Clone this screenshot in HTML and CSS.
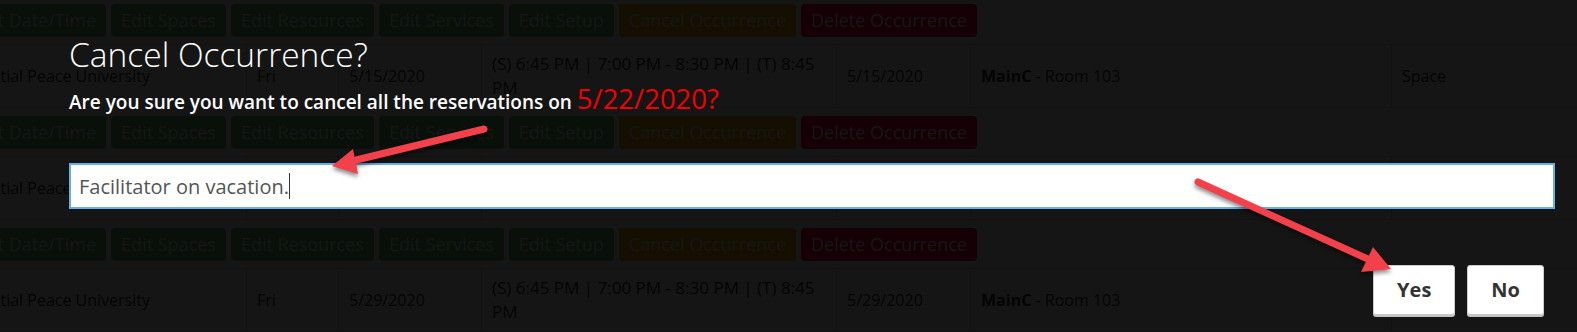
FILE: index.html
```html
<!DOCTYPE html>
<html lang="en">
<head>
<meta charset="utf-8">
<title>Cancel Occurrence</title>
<link rel="stylesheet" href="styles.css">
</head>
<body>
<div class="page">
  <div class="item">
    <div class="actions">
      <span class="btn btn-edit">Edit Date/Time</span>
      <span class="btn btn-edit">Edit Spaces</span>
      <span class="btn btn-edit">Edit Resources</span>
      <span class="btn btn-edit">Edit Services</span>
      <span class="btn btn-edit">Edit Setup</span>
      <span class="btn btn-cancel">Cancel Occurrence</span>
      <span class="btn btn-delete">Delete Occurrence</span>
    </div>
    <div class="row">
      <div class="cell">Spatial Peace University</div>
      <div class="cell">Fri</div>
      <div class="cell">5/15/2020</div>
      <div class="cell cell-time">(S) 6:45 PM | 7:00 PM - 8:30 PM | (T) 8:45 PM</div>
      <div class="cell">5/15/2020</div>
      <div class="cell"><span><b>MainC</b> - Room 103</span></div>
      <div class="cell">Space</div>
    </div>
  </div>
  <div class="item">
    <div class="actions">
      <span class="btn btn-edit">Edit Date/Time</span>
      <span class="btn btn-edit">Edit Spaces</span>
      <span class="btn btn-edit">Edit Resources</span>
      <span class="btn btn-edit">Edit Services</span>
      <span class="btn btn-edit">Edit Setup</span>
      <span class="btn btn-cancel">Cancel Occurrence</span>
      <span class="btn btn-delete">Delete Occurrence</span>
    </div>
    <div class="row">
      <div class="cell">Spatial Peace University</div>
      <div class="cell">Fri</div>
      <div class="cell">5/22/2020</div>
      <div class="cell cell-time">(S) 6:45 PM | 7:00 PM - 8:30 PM | (T) 8:45 PM</div>
      <div class="cell">5/22/2020</div>
      <div class="cell"><span><b>MainC</b> - Room 103</span></div>
      <div class="cell">Space</div>
    </div>
  </div>
  <div class="item">
    <div class="actions">
      <span class="btn btn-edit">Edit Date/Time</span>
      <span class="btn btn-edit">Edit Spaces</span>
      <span class="btn btn-edit">Edit Resources</span>
      <span class="btn btn-edit">Edit Services</span>
      <span class="btn btn-edit">Edit Setup</span>
      <span class="btn btn-cancel">Cancel Occurrence</span>
      <span class="btn btn-delete">Delete Occurrence</span>
    </div>
    <div class="row">
      <div class="cell">Spatial Peace University</div>
      <div class="cell">Fri</div>
      <div class="cell">5/29/2020</div>
      <div class="cell cell-time">(S) 6:45 PM | 7:00 PM - 8:30 PM | (T) 8:45 PM</div>
      <div class="cell">5/29/2020</div>
      <div class="cell"><span><b>MainC</b> - Room 103</span></div>
      <div class="cell">Space</div>
    </div>
  </div>
</div>

<div class="backdrop"></div>

<div class="modal">
  <h1 class="modal-title">Cancel Occurrence?</h1>
  <p class="modal-text">Are you sure you want to cancel all the reservations on <span class="modal-date">5/22/2020?</span></p>
  <div class="reason"><span>Facilitator on vacation.</span><span class="caret"></span></div>
  <div class="modal-footer">
    <span class="dlg-btn">Yes</span>
    <span class="dlg-btn">No</span>
  </div>
</div>

<svg class="annotations" width="1577" height="332" viewBox="0 0 1577 332" xmlns="http://www.w3.org/2000/svg">
  <g class="arrow">
    <line x1="484" y1="129" x2="352" y2="161" stroke="#f2414a" stroke-width="7" stroke-linecap="round"/>
    <polygon points="332,166 353,149 358,174" fill="#f2414a"/>
  </g>
  <g class="arrow">
    <line x1="1198" y1="182" x2="1370" y2="260" stroke="#f2414a" stroke-width="7" stroke-linecap="round"/>
    <polygon points="1391,269 1373,247 1361,272" fill="#f2414a"/>
  </g>
</svg>
</body>
</html>
```

FILE: styles.css
```css
html, body {
  margin: 0;
  padding: 0;
}

body {
  width: 1577px;
  height: 332px;
  overflow: hidden;
  position: relative;
  background: #fff;
  color: #333;
  font-family: "Open Sans", "Liberation Sans", sans-serif;
}

.page {
  margin: -4px 0 0 -38px;
}

.actions {
  display: flex;
  gap: 5px;
  padding: 8px 0 7px;
}

.btn {
  display: block;
  height: 33px;
  padding: 0 10px;
  border-radius: 4px;
  color: #fff;
  font-size: 18px;
  line-height: 33px;
  white-space: nowrap;
}

.btn-edit { background: #70b070; }
.btn-cancel { background: #f2b400; }
.btn-delete { background: #f0003c; }

.row {
  display: grid;
  grid-template-columns: 284px 92px 143px 355px 134px 421px 250px;
  border-top: 1px solid #ddd;
  border-bottom: 1px solid #ddd;
  height: 64px;
  box-sizing: border-box;
}

.cell {
  display: flex;
  align-items: center;
  padding: 7px 10px;
  font-size: 16px;
  line-height: 24px;
  border-left: 1px solid #ddd;
}

.cell-time {
  font-size: 17px;
}

.cell:first-child {
  border-left: none;
  padding-left: 11px;
}

.backdrop {
  position: absolute;
  inset: 0;
  background: rgba(0, 0, 0, 0.918);
}

.modal {
  position: absolute;
  top: 0;
  left: 0;
  right: 0;
  padding: 34px 22px 0 69px;
  display: flex;
  flex-direction: column;
}

.modal-title {
  margin: 0;
  font-weight: 300;
  font-size: 33.5px;
  line-height: 40px;
  color: #fff;
}

.modal-text {
  margin: 7px 0 0;
  font-size: 19px;
  font-weight: 600;
  line-height: 36px;
  color: #fff;
}

.modal-date {
  color: #f20000;
  font-size: 27.5px;
  font-weight: 400;
}

.reason {
  margin-top: 43px;
  height: 46px;
  box-sizing: border-box;
  border: 2px solid #66afe9;
  background: #fff;
  padding: 0 8px;
  display: flex;
  align-items: center;
  font-size: 20px;
  color: #555;
}

.caret {
  display: block;
  width: 1px;
  height: 26px;
  background: #333;
}

.modal-footer {
  margin-top: 56px;
  display: flex;
  justify-content: flex-end;
  gap: 12px;
  padding-right: 11px;
}

.dlg-btn {
  display: block;
  height: 50px;
  box-sizing: border-box;
  padding: 0 23px;
  background: #fff;
  border: 1px solid #ccc;
  border-radius: 3px;
  box-shadow: 0 2px 0 #c4c4c4;
  font-weight: 700;
  font-size: 20px;
  line-height: 48px;
  color: #333;
}

.annotations {
  position: absolute;
  top: 0;
  left: 0;
  pointer-events: none;
}

.arrow {
  filter: drop-shadow(0 3px 2px rgba(0, 0, 0, 0.45));
}
```
